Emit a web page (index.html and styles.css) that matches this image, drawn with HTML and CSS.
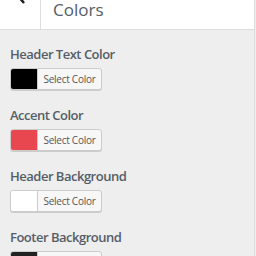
FILE: index.html
```html
<html>
<head>
  <meta charset="UTF-8">
  <meta name="viewport" content="width=device-width, initial-scale=1.0">
  <title>Colors</title>
  <link rel="stylesheet" href="styles.css">
</head>
<body>

  <div class="panel">
    <div class="panel-header">
      <div class="back">
        <svg class="back-icon" width="20" height="20" viewBox="0 0 20 20">
          <path d="M14 2 L8 9 L14 16" fill="none" stroke="#191e23" stroke-width="2.5"/>
        </svg>
      </div>
      <h3 class="title">Colors</h3>
    </div>

    <div class="controls">
      <div class="control">
        <span class="label">Header Text Color</span>
        <button class="color-result"><span class="swatch" style="background: #000000;"></span><span class="picker-text">Select Color</span></button>
      </div>
      <div class="control">
        <span class="label">Accent Color</span>
        <button class="color-result"><span class="swatch" style="background: #e8474f;"></span><span class="picker-text">Select Color</span></button>
      </div>
      <div class="control">
        <span class="label">Header Background</span>
        <button class="color-result"><span class="swatch" style="background: #ffffff;"></span><span class="picker-text">Select Color</span></button>
      </div>
      <div class="control">
        <span class="label">Footer Background</span>
        <button class="color-result"><span class="swatch" style="background: #222222;"></span><span class="picker-text">Select Color</span></button>
      </div>
    </div>
  </div>

</body>
</html>
```

FILE: styles.css
```css
body {
  margin: 0;
  background: #eeeeee;
  font-family: 'Open Sans', 'Liberation Sans', sans-serif;
  color: #555d66;
  overflow: hidden;
}

.panel {
  width: 254px;
  height: 256px;
  border-right: 1px solid #dddddd;
}

.panel-header {
  display: flex;
  height: 29px;
  background: #ffffff;
  border-bottom: 1px solid #dddddd;
}

.back {
  position: relative;
  width: 40px;
  border-right: 1px solid #dddddd;
  overflow: hidden;
}

.back-icon {
  position: absolute;
  left: 10px;
  top: -13px;
}

.title {
  margin: 0;
  padding-left: 12px;
  font-size: 17px;
  font-weight: 400;
  line-height: 20px;
}

.controls {
  padding: 14px 0 0 10px;
}

.control {
  display: flex;
  flex-direction: column;
  align-items: flex-start;
  gap: 4px;
  margin-bottom: 15px;
}

.label {
  font-size: 13px;
  font-weight: 600;
  line-height: 20px;
  letter-spacing: -0.5px;
}

.color-result {
  display: flex;
  height: 22px;
  padding: 0;
  border: 1px solid #cccccc;
  border-radius: 3px;
  background: #f7f7f7;
  box-shadow: 0 1px 0 #cccccc;
  overflow: hidden;
  font-family: inherit;
}

.swatch {
  width: 26px;
  height: 100%;
  border-right: 1px solid #cccccc;
}

.picker-text {
  width: 63px;
  font-size: 10px;
  line-height: 20px;
  color: #555555;
  text-align: center;
  letter-spacing: -0.25px;
}
```
